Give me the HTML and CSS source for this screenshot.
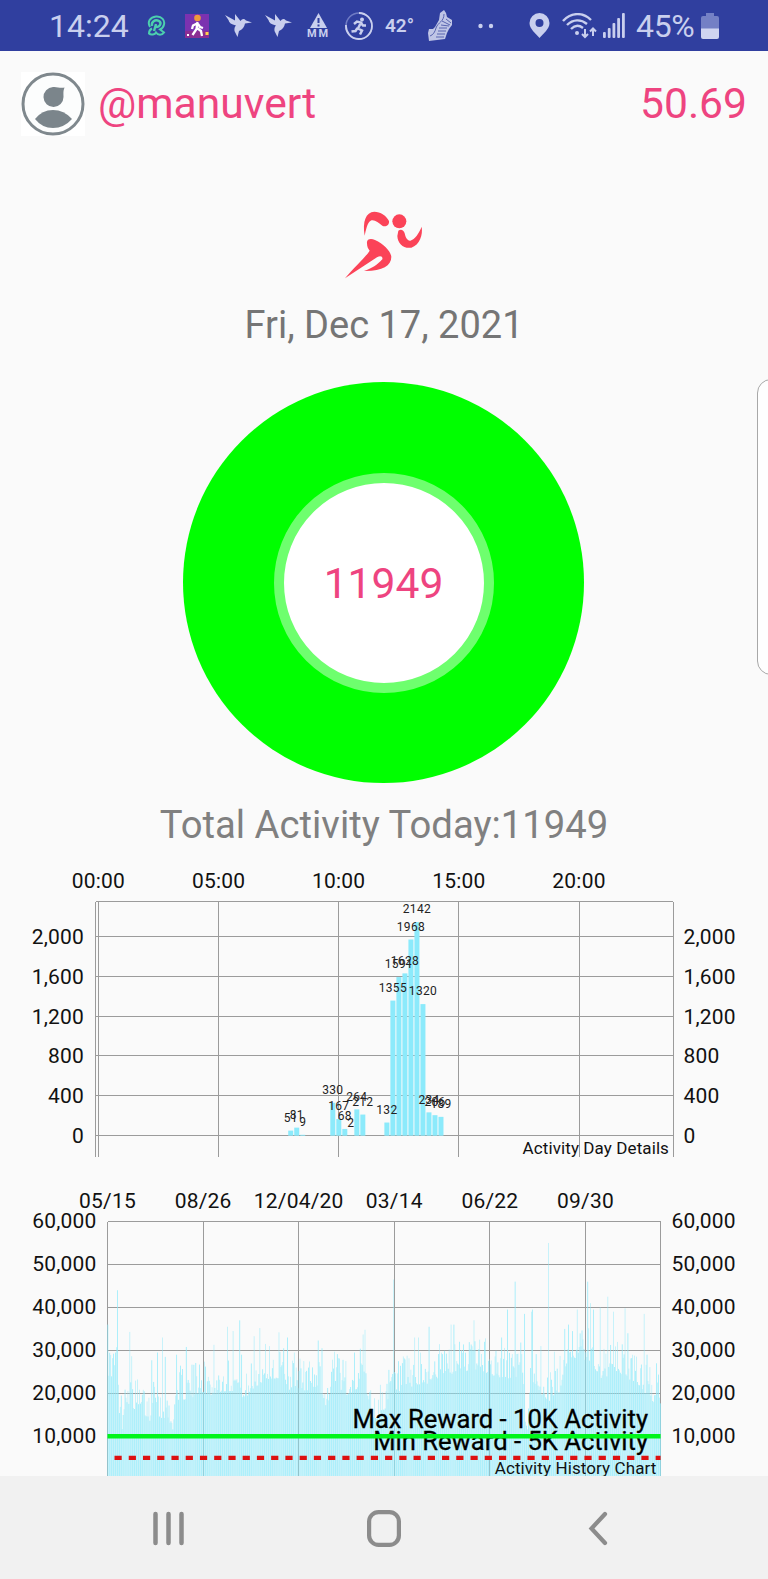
FILE: index.html
```html
<!DOCTYPE html>
<html lang="en">
<head>
  <meta charset="UTF-8">
  <meta name="viewport" content="width=device-width, initial-scale=1.0">
  <title>Activity Tracker</title>
  <link rel="stylesheet" href="styles.css">
</head>
<body>
  <div class="screen">
    <div class="status-bar">
      <span class="time">14:24</span>
      <svg class="status-icon" width="20" height="22" viewBox="0 0 20 22" fill="none" stroke="#4ccfae" stroke-width="2">
        <path d="M3 12C0 7 3 2 9 1.500c6-.5 9 4 8 8-.5 3-2 4-4 5l4 3c-2 3-6 3-8 0-1 2-5 3-7 1 0-3 1-4 3-5"/>
        <path d="M5 11c-1-4 3-7 7-5 3 2 1 6-3 6M9 9l-2 7" stroke-width="2.400"/>
      </svg>
      <svg class="status-icon" width="24" height="24" viewBox="0 0 24 24">
        <rect width="24" height="24" fill="#7b32b0"/>
        <rect y="17" width="24" height="7" fill="#8b2e93"/>
        <circle cx="12.500" cy="4" r="3.300" fill="#f09a3c"/>
        <path d="M12.500 8l-1 7-4 6M12 14l4 3 1 5M12 9.500l-4 2-1 3.500M13 10l2 3 3 1" fill="none" stroke="#fff" stroke-width="2.300"/>
        <path d="M2 20h2v2H2z" fill="#fff"/>
        <path d="M20.500 18h3v3h-3z" fill="#ffd24a"/>
      </svg>
      <svg class="status-icon" width="27" height="24" viewBox="0 0 27 24" fill="#c9cfee">
        <path d="M0 1l10 5.500L10 0l5.500 7Q18 3.500 21 6.500l6 2-7 1Q19 15 14 17l-1.500 6-3-6Q9 13 11 11.500 4 10 3.500 6z"/>
      </svg>
      <svg class="status-icon" width="27" height="24" viewBox="0 0 27 24" fill="#c9cfee">
        <path d="M0 1l10 5.500L10 0l5.500 7Q18 3.500 21 6.500l6 2-7 1Q19 15 14 17l-1.500 6-3-6Q9 13 11 11.500 4 10 3.500 6z"/>
      </svg>
      <div class="warning">
        <svg width="17" height="15" viewBox="0 0 17 15">
          <path d="M8.500 0L17 15H0z" fill="#c9cfee"/>
          <path d="M8.500 5v5M8.500 11.500v2" stroke="#303f9f" stroke-width="2"/>
        </svg>
        <span>MM</span>
      </div>
      <svg class="status-icon" width="28" height="28" viewBox="0 0 28 28" fill="none" stroke="#c9cfee">
        <circle cx="14" cy="14" r="13" stroke="#6f7bc4" stroke-width="1.500"/>
        <path d="M14 1a13 13 0 1 1-13 12" stroke-width="1.800"/>
        <circle cx="17" cy="7.500" r="2" fill="#c9cfee" stroke="none"/>
        <path d="M9 12l3-2.500 4 1-3 6 4 2-2 4M12.500 16l-2 3-4 .5M16 11l2 2.500h3" stroke-width="2.500"/>
      </svg>
      <span class="temperature">42°</span>
      <svg class="status-icon" width="25" height="31" viewBox="0 0 25 31">
        <path d="M12 3l4-3 2 3 1 4 5 3v5l-3 4-2 4-2 6-16 2-1-8 1-4h4l2-2 4-7z" fill="#bfc5e6"/>
        <path d="M16 4c0 8-6 8-8 14-1 4-3 7-6 8M18 9l5 4M13 15l8 1M11 18h8M10 21h8M9 24h8M8 27h8M14 11l8 4" fill="none" stroke="#5864b0" stroke-width="1"/>
      </svg>
      <svg class="status-icon" width="16" height="6" viewBox="0 0 16 6" fill="#c9cfee">
        <circle cx="2.500" cy="3" r="2.200"/>
        <circle cx="13" cy="3" r="2.200"/>
      </svg>
      <svg class="status-icon" width="21" height="25" viewBox="0 0 21 25">
        <path d="M10.500 0A10 10 0 0 0 .5 10c0 6 6 10 10 15 4-5 10-9 10-15a10 10 0 0 0-10-10zm0 6a4 4 0 1 1 0 8 4 4 0 0 1 0-8z" fill="#c9cfee"/>
      </svg>
      <svg class="status-icon" width="35" height="26" viewBox="0 0 35 26" fill="none" stroke="#c9cfee" stroke-width="2.400">
        <path d="M1 8C9-1 21-1 29 7M5 12c6-6 14-6 20-1M9 16c4-4 8-4 12-1"/>
        <circle cx="15" cy="20" r="2" fill="#c9cfee" stroke="none"/>
        <path d="M23 16v8M20 21l3 3 3-3M31 23v-7M28 18.500l3-3 3 3" stroke-width="2"/>
      </svg>
      <svg class="status-icon" width="22" height="25" viewBox="0 0 22 25" fill="#c9cfee">
        <rect x="0" y="19" width="2.800" height="6" rx="1"/>
        <rect x="4.800" y="15" width="2.800" height="10" rx="1"/>
        <rect x="9.500" y="10" width="2.800" height="15" rx="1"/>
        <rect x="14.200" y="5" width="2.800" height="20" rx="1"/>
        <rect x="19" y="0" width="2.800" height="25" rx="1"/>
      </svg>
      <span class="battery-level">45%</span>
      <svg class="status-icon" width="18" height="26" viewBox="0 0 18 26">
        <path d="M5 0h8v3h3q2 0 2 2v11H0V5q0-2 2-2h3z" fill="#7480c5"/>
        <path d="M0 15.500h18V24q0 2-2 2H2q-2 0-2-2z" fill="#d0d5f1"/>
      </svg>
    </div>

    <div class="content">
      <div class="header">
        <svg class="avatar" width="64" height="64" viewBox="0 0 64 64">
          <rect width="64" height="64" fill="#fff"/>
          <circle cx="32" cy="32" r="30" fill="#fcfdfd" stroke="#7f888d" stroke-width="3"/>
          <path d="M43.500 15.500C39 16.500 36 14.500 32 15a10 10 0 1 0 10.500 10c0-4-.5-6 1-9.500z" fill="#7b858b"/>
          <path d="M14 47q7-9 18-9t19 9q-8 9-19 9t-18-9z" fill="#7b858b"/>
        </svg>
        <span class="username">@manuvert</span>
        <span class="balance">50.69</span>
      </div>

      <svg class="runner" width="82" height="70" viewBox="340 60 246 210" fill="#fb4358">
        <circle cx="509" cy="94" r="21"/>
        <path d="M405 137C398 95 408 66 434 65c18 0 37 12 44 28 2 14-12 19-20 14-12-10-25-20-35-15-11 7-14 28-18 45z"/>
        <path d="M506 122c7-6 16-3 19 8 3 13 8 23 17 22 13-3 27-24 34-42 4 25-6 54-31 63-23 4-41-12-42-35z"/>
        <path d="M412 160c-2-12 10-16 24-10 26 12 46 32 49 50 0 27-28 44-82 43 24-8 40-18 55-35 2-8-5-12-16-6l-96 63c29-35 59-60 74-83-5-6-8-12-8-22z"/>
      </svg>
      <div class="date">Fri, Dec 17, 2021</div>

      <div class="donut">
        <div class="donut-hole">11949</div>
      </div>

      <div class="total">Total Activity Today:11949</div>

      <svg class="chart" id="dayChart" width="768" height="312" viewBox="0 853 768 312"></svg>
      <svg class="chart" id="historyChart" width="768" height="311" viewBox="0 1165 768 311"></svg>
    </div>

    <div class="nav-bar">
      <svg width="31" height="35" viewBox="0 0 31 35" stroke="#8c8c8c" stroke-width="4.500" stroke-linecap="round">
        <path d="M2.500 3v29M15.500 3v29M28.500 3v29"/>
      </svg>
      <svg class="home" width="34" height="37" viewBox="0 0 34 37" fill="none" stroke="#8c8c8c" stroke-width="4.200">
        <rect x="2.100" y="2.100" width="29.800" height="32.800" rx="9.500"/>
      </svg>
      <svg width="20" height="35" viewBox="0 0 20 35" fill="none" stroke="#8c8c8c" stroke-width="4.200" stroke-linecap="round">
        <path d="M17 3L3.500 17.500 17 32"/>
      </svg>
    </div>

    <div class="edge-panel"></div>
  </div>

  <script src="script.js"></script>
</body>
</html>
```

FILE: styles.css
```css
body {
  margin: 0;
  font-family: Roboto, sans-serif;
  background-color: #fafafa;
}

.screen {
  position: relative;
  width: 768px;
  height: 1579px;
  overflow: hidden;
  display: flex;
  flex-direction: column;
}

.status-bar {
  height: 51px;
  flex-shrink: 0;
  display: grid;
  grid-template-columns: 98px 38px 40px 40px 42px 38px 40px 43px 50px 51px 33px 41px 33px 65px 18px;
  align-items: center;
  padding-left: 49px;
  background-color: #303f9f;
  color: #c9cfee;
}

.status-icon {
  display: block;
}

.time,
.battery-level {
  font-size: 32px;
}

.battery-level {
  letter-spacing: -0.3px;
}

.temperature {
  font-size: 19px;
  font-weight: 600;
}

.warning {
  display: flex;
  flex-direction: column;
  align-items: center;
  width: 23px;
  font-size: 11px;
  font-weight: bold;
  line-height: 11px;
  letter-spacing: 2px;
}

.content {
  height: 1425px;
  flex-shrink: 0;
  overflow: hidden;
  display: flex;
  flex-direction: column;
  align-items: center;
}

.header {
  display: flex;
  align-items: center;
  box-sizing: border-box;
  width: 100%;
  height: 64px;
  margin-top: 21px;
  padding: 0 21px;
  font-size: 42.6px;
  line-height: 62px;
  color: #ee4480;
}

.username,
.balance {
  height: 64px;
}

.username {
  margin-left: 13px;
}

.balance {
  margin-left: auto;
}

.runner {
  margin-top: 74px;
}

.date {
  margin-top: 22px;
  height: 46px;
  line-height: 46px;
  font-size: 38px;
  color: #757575;
}

.donut {
  width: 401px;
  height: 401px;
  margin-top: 34px;
  margin-right: 1px;
  border-radius: 50%;
  background-color: #00ff00;
  display: flex;
  align-items: center;
  justify-content: center;
}

.donut-hole {
  width: 200px;
  height: 200px;
  line-height: 201px;
  border: 10px solid #6eff6e;
  border-radius: 50%;
  background-color: #fff;
  text-align: center;
  font-size: 42.6px;
  color: #ee4480;
}

.total {
  margin-top: 19px;
  height: 46px;
  line-height: 46px;
  font-size: 38.25px;
  color: #808080;
}

.chart {
  display: block;
  flex-shrink: 0;
}

#dayChart {
  margin-top: 5px;
}

.grid {
  stroke: #9b9b9b;
  stroke-width: 1;
  shape-rendering: crispEdges;
}

.axis-label {
  font-size: 21px;
  letter-spacing: 0.2px;
  fill: #111;
}

.bar {
  fill: #8ceafb;
}

.bar-pale {
  fill: #8ceafb;
  opacity: 0.65;
}

.bar-value {
  font-size: 12px;
  letter-spacing: 0.3px;
  fill: #222;
}

.description {
  font-size: 17px;
  letter-spacing: 0.1px;
  fill: #111;
}

.limit-label {
  font-size: 25.6px;
  fill: #000;
  stroke: #000;
  stroke-width: 0.3;
}

.limit-max {
  stroke: #00f51a;
  stroke-width: 4.5;
}

.limit-min {
  stroke: #dd1111;
  stroke-width: 4.3;
  stroke-dasharray: 7.2 7.04;
}

.nav-bar {
  flex: 1;
  display: flex;
  align-items: center;
  justify-content: space-between;
  padding: 2px 160px 0 153px;
  background-color: #f1f1f1;
}

.home {
  margin-right: 5px;
}

/* edge handle lies over the page */
.edge-panel {
  position: absolute;
  top: 379px;
  left: 757px;
  width: 30px;
  height: 294px;
  border: 1px solid #a8a8a8;
  border-radius: 14px;
  background-color: #fefefe;
}
```

FILE: script.js
```javascript
var SVG_NS = 'http://www.w3.org/2000/svg';

function add(parent, tag, attrs, text) {
  var el = document.createElementNS(SVG_NS, tag);
  for (var key in attrs) {
    el.setAttribute(key, attrs[key]);
  }
  if (text !== undefined) {
    el.textContent = text;
  }
  parent.appendChild(el);
  return el;
}

function line(parent, x1, y1, x2, y2, cls) {
  add(parent, 'line', { x1: x1, y1: y1, x2: x2, y2: y2, 'class': cls });
}

function label(parent, x, y, anchor, cls, text) {
  add(parent, 'text', { x: x, y: y, 'text-anchor': anchor, 'class': cls }, text);
}

// Steps per quarter of an hour, today
function drawDayChart() {
  var chart = document.getElementById('dayChart');
  var left = 95.7, right = 673, top = 901.5, zero = 1135.7, bottom = 1157;
  var hours = ['00:00', '05:00', '10:00', '15:00', '20:00'];
  var steps = {
    32: 51, 33: 81, 34: 9, 39: 330, 40: 167, 41: 68, 42: 2, 43: 264, 44: 212,
    48: 132, 49: 1355, 50: 1591, 51: 1628, 52: 1968, 53: 2142, 54: 1320,
    55: 234, 56: 206, 57: 189
  };

  hours.forEach(function (hour, i) {
    var x = 98.4 + i * 120.15;
    line(chart, x, top, x, bottom, 'grid');
    label(chart, x, 888, 'middle', 'axis-label', hour);
  });
  for (var value = 0; value <= 2000; value += 400) {
    var y = zero - value * 0.0997;
    line(chart, left, y, right, y, 'grid');
    label(chart, 84, y + 7.5, 'end', 'axis-label', value.toLocaleString('en-US'));
    label(chart, 683.5, y + 7.5, 'start', 'axis-label', value.toLocaleString('en-US'));
  }
  line(chart, left, top, right, top, 'grid');
  line(chart, left, top, left, bottom, 'grid');
  line(chart, right, top, right, bottom, 'grid');

  for (var slot in steps) {
    var h = steps[slot] * 0.0997;
    add(chart, 'rect', { x: 95.9 + slot * 6.01, y: zero - h, width: 5, height: h, 'class': 'bar' });
  }
  for (slot in steps) {
    label(chart, 98.4 + slot * 6.01, zero - steps[slot] * 0.0997 - 8.8, 'middle', 'bar-value', steps[slot]);
  }
  label(chart, 669, 1153.6, 'end', 'description', 'Activity Day Details');
}

// Daily totals in thousands: a running average with the peak days on top
var average = [
  [107, 25], [117, 26], [118, 18], [122, 13], [125, 21], [128, 18], [131, 24], [133, 18],
  [140, 17], [150, 15], [154, 22], [160, 15], [165, 16], [172, 12], [176, 20], [190, 20],
  [200, 22], [210, 21], [225, 22], [240, 22], [245, 18], [250, 22], [262, 24], [270, 25],
  [280, 24], [286, 22], [295, 23], [305, 22], [315, 23], [322, 21], [326, 17], [332, 24],
  [345, 21], [355, 22], [362, 25], [366, 26], [367, 18], [375, 15], [385, 18], [390, 20],
  [400, 22], [420, 23], [430, 24], [445, 26], [455, 26], [470, 27], [480, 27], [487, 26],
  [500, 25], [515, 25], [523, 26], [525, 13], [528, 12], [530, 25], [545, 20], [555, 19],
  [562, 24], [568, 30], [590, 29], [600, 25], [620, 26], [640, 23], [650, 20], [661, 18]
];
var peaks = [
  [108, 36], [115.5, 29.5], [117.5, 44], [129.5, 34.3], [151.5, 27.7], [158, 29.5], [162.5, 33],
  [165, 28.5], [177, 29], [186, 30.8], [199.5, 26.7], [214, 31.3], [227, 35.5], [233, 34.5],
  [239.5, 37], [242, 29], [254, 33.3], [260, 35.2], [266, 31.5], [279.5, 34.2], [284, 30.5],
  [288, 33], [294, 29.5], [304, 27.5], [318.5, 32.3], [322, 30.5], [335, 29.7], [338, 28.2],
  [346, 27.5], [355, 29.5], [363, 33.7], [365, 34.8], [393.5, 46.5], [414.5, 33], [418.5, 33],
  [429.5, 35.5], [451.5, 36], [454.5, 36], [460, 32], [474.5, 37], [480, 32.5], [486, 32.8],
  [501.5, 33], [508, 39.5], [514.8, 46], [524.5, 38.5], [531.5, 39], [532.5, 39.5], [541, 31],
  [548.3, 55], [554, 29.7], [565, 35], [568.5, 36], [577.8, 39.5], [587.5, 46], [590.5, 41],
  [594, 39.5], [600.5, 40], [607.5, 42.5], [613.8, 39], [624.8, 39.8], [628.5, 34],
  [644.5, 38.5], [647, 29], [657, 27]
];

function averageAt(x) {
  for (var i = 1; i < average.length; i++) {
    if (x <= average[i][0]) {
      var a = average[i - 1], b = average[i];
      return a[1] + (b[1] - a[1]) * (x - a[0]) / (b[0] - a[0]);
    }
  }
  return average[average.length - 1][1];
}

function drawHistoryChart() {
  var chart = document.getElementById('historyChart');
  var left = 107.5, right = 660.6, top = 1221.5, bottom = 1476, zero = 1479.3;
  var days = ['05/15', '08/26', '12/04/20', '03/14', '06/22', '09/30'];
  var pitch = 0.956;

  days.forEach(function (day, i) {
    var x = left + i * 95.6;
    line(chart, x, top, x, bottom, 'grid');
    label(chart, x, 1208, 'middle', 'axis-label', day);
  });
  for (var value = 10000; value <= 60000; value += 10000) {
    var y = zero - value * 0.004297;
    line(chart, left, y, right, y, 'grid');
    label(chart, 96.5, y + 6.5, 'end', 'axis-label', value.toLocaleString('en-US'));
    label(chart, 671.5, y + 6.5, 'start', 'axis-label', value.toLocaleString('en-US'));
  }
  line(chart, right, top, right, bottom, 'grid');

  var totals = [];
  var seed = 17;
  for (var x = left; x < right - 0.5; x += pitch) {
    seed = (seed * 16807) % 2147483647;
    var r = seed / 2147483647;
    totals.push(averageAt(x) - 1.5 + r * r * 8);
  }
  peaks.forEach(function (peak) {
    totals[Math.floor((peak[0] - left) / pitch)] = peak[1];
  });
  totals.forEach(function (total, i) {
    var h = total * 4.297;
    add(chart, 'rect', {
      x: left + i * pitch, y: zero - h, width: 0.7, height: h,
      'class': i % 2 ? 'bar-pale' : 'bar'
    });
  });

  line(chart, 114.5, 1457.8, right, 1457.8, 'limit-min');
  label(chart, 648, 1450, 'end', 'limit-label', 'Min Reward - 5K Activity');
  line(chart, left, 1436.3, right, 1436.3, 'limit-max');
  label(chart, 648, 1428.4, 'end', 'limit-label', 'Max Reward - 10K Activity');
  label(chart, 656.5, 1473.7, 'end', 'description', 'Activity History Chart');
}

drawDayChart();
drawHistoryChart();
```
